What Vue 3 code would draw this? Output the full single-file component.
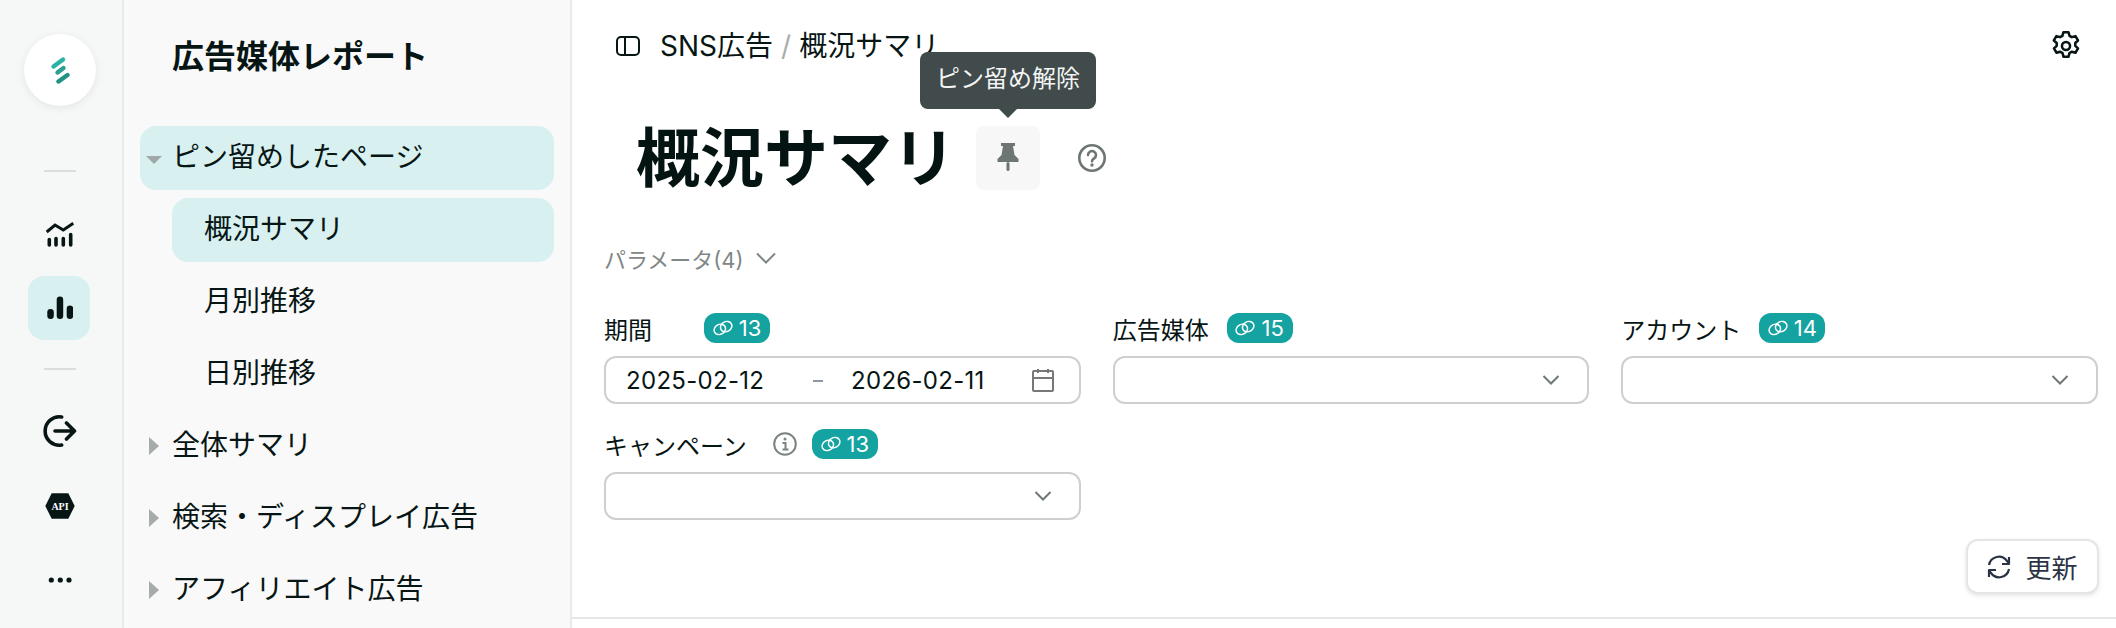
<script setup>
const fields = [
  { label: "期間", count: 13, date: true, wide: true },
  { label: "広告媒体", count: 15 },
  { label: "アカウント", count: 14 },
  { label: "キャンペーン", count: 13, info: true },
];
const groups = ["全体サマリ", "検索・ディスプレイ広告", "アフィリエイト広告"];
const pages = ["月別推移", "日別推移"];
</script>

<template>
  <div class="page">
    <aside class="rail">
      <div class="logo">
        <svg width="20" height="30" viewBox="0 0 20 30" fill="none" stroke-width="4.4" stroke-linecap="round">
          <path d="M3.5 11.5 13 4.5" stroke="#2cb3a6" />
          <path d="M7.5 17.5 13.5 13" stroke="#2a9f92" />
          <path d="M8.5 26.5 17.5 20" stroke="#1f9384" />
        </svg>
      </div>
      <div class="rule first"></div>
      <div class="rail-btn">
        <svg class="chart" width="30" height="26" viewBox="0 0 30 26" fill="none" stroke="#071615">
          <path d="M1.7 10 10 3l8.3 5 10-6.7" stroke-width="3" />
          <path d="M4.3 17.5V23M11 16.5V23M18.3 16.5V23M25.7 12.5V23" stroke-width="3.6" stroke-linecap="round" />
        </svg>
      </div>
      <div class="rail-btn active">
        <svg width="28" height="24" viewBox="0 0 28 24" fill="#071615">
          <rect x="2.3" y="13" width="6.5" height="10" rx="3.2" />
          <rect x="11.7" y="0.5" width="6.5" height="22.5" rx="3.2" />
          <rect x="21.7" y="9.5" width="6.5" height="13.5" rx="3.2" />
        </svg>
      </div>
      <div class="rule"></div>
      <div class="rail-btn exit">
        <svg width="34" height="36" viewBox="0 0 34 36" fill="none" stroke="#071615" stroke-width="3.6" stroke-linecap="round" stroke-linejoin="round">
          <path d="M18.7 4A14.2 14.2 0 1 0 18.7 32" />
          <path d="M12 18h19.5M23.5 10l8 8-8 8" />
        </svg>
      </div>
      <div class="rail-btn api">
        <svg width="32" height="28" viewBox="0 0 32 28">
          <path d="M1.3 14 7.7 1.3h16.6L30.7 14l-6.4 12.7H7.7z" fill="#071615" />
          <text x="16" y="17.5" text-anchor="middle" class="api-text">API</text>
        </svg>
      </div>
      <div class="rail-btn dots">
        <svg width="26" height="6" viewBox="0 0 26 6" fill="#071615">
          <circle cx="4.3" cy="3" r="2.6" />
          <circle cx="13.3" cy="3" r="2.6" />
          <circle cx="22" cy="3" r="2.6" />
        </svg>
      </div>
    </aside>

    <nav class="side">
      <h2>広告媒体レポート</h2>
      <ul>
        <li class="item selected">
          <span class="arrow-down"></span>ピン留めしたページ
        </li>
        <li class="item sub selected">概況サマリ</li>
        <li v-for="page in pages" :key="page" class="item sub">{{ page }}</li>
        <li v-for="group in groups" :key="group" class="item">
          <span class="arrow-right"></span>{{ group }}
        </li>
      </ul>
    </nav>

    <main class="main">
      <header class="topbar">
        <svg class="panel" width="24" height="20" viewBox="0 0 24 20" fill="none" stroke="#071615" stroke-width="2">
          <rect x="1" y="1" width="22" height="18" rx="4" />
          <path d="M9 1v18" />
        </svg>
        <span class="crumb">SNS広告</span>
        <span class="slash">/</span>
        <span class="crumb">概況サマリ</span>
        <svg class="gear" width="36" height="36" viewBox="0 0 24 24" fill="none" stroke="#071615" stroke-width="1.7" stroke-linejoin="round">
          <path d="M10.3 2.8h3.4l.6 2.4 1.6.9 2.4-.7 1.7 2.9-1.8 1.7v1.9l1.8 1.7-1.7 2.9-2.4-.7-1.6.9-.6 2.4h-3.4l-.6-2.4-1.6-.9-2.4.7-1.7-2.9 1.8-1.7v-1.9L3.9 8.3l1.7-2.9 2.4.7 1.6-.9z" />
          <circle cx="12" cy="12" r="2.7" />
        </svg>
      </header>

      <div class="title-row">
        <h1>概況サマリ</h1>
        <div class="pin">
          <div class="tooltip">ピン留め解除</div>
          <svg width="24" height="32" viewBox="0 0 24 32" fill="#6d7575">
            <path d="M5 1h14v3h-2l1.5 9 4 4v3H1.5v-3l4-4L7 4H5z" />
            <rect x="10.5" y="20" width="3" height="9" rx="1.5" />
          </svg>
        </div>
        <svg class="help" width="30" height="30" viewBox="0 0 30 30" fill="none" stroke="#6d7575" stroke-width="2.6">
          <circle cx="15" cy="15" r="12.7" />
          <path d="M11 12a4 4 0 1 1 6 3.5c-1.3.7-2 1.3-2 2.8" stroke-linecap="round" />
          <circle cx="15" cy="22" r="1.7" fill="#6d7575" stroke="none" />
        </svg>
      </div>

      <div class="params">
        パラメータ(4)
        <svg width="20" height="12" viewBox="0 0 20 12" fill="none" stroke="#7f8787" stroke-width="2">
          <path d="m1 1.5 9 9 9-9" />
        </svg>
      </div>

      <section class="grid">
        <div v-for="field in fields" :key="field.label" class="field">
          <div class="label" :class="{ wide: field.wide }">
            <span>{{ field.label }}</span>
            <svg v-if="field.info" class="info" width="24" height="24" viewBox="0 0 24 24" fill="none" stroke="#7b8282" stroke-width="2">
              <circle cx="12" cy="12" r="10.8" />
              <path d="M9.5 11H12.5V17M9.5 17.5h6" />
              <circle cx="12" cy="7" r="1.5" fill="#7b8282" stroke="none" />
            </svg>
            <span class="badge">
              <svg width="20" height="18" viewBox="0 0 22 18" fill="none" stroke="#fff" stroke-width="1.6">
                <ellipse cx="7.5" cy="10.5" rx="6.5" ry="5.5" transform="rotate(-30 7.5 10.5)" />
                <ellipse cx="14.5" cy="7.5" rx="6.5" ry="5.5" transform="rotate(-30 14.5 7.5)" />
              </svg>
              {{ field.count }}
            </span>
          </div>
          <div class="input">
            <template v-if="field.date">
              <span class="date">2025-02-12</span>
              <span class="dash"></span>
              <span class="date">2026-02-11</span>
              <svg class="calendar" width="24" height="24" viewBox="0 0 24 24" fill="none" stroke="#777" stroke-width="2">
                <rect x="2" y="3" width="20" height="20" rx="1" />
                <path d="M2 10h20M7 1v4M17 1v4" />
              </svg>
            </template>
            <svg v-else class="chevron" width="18" height="12" viewBox="0 0 18 12" fill="none" stroke="#6f7676" stroke-width="2">
              <path d="m1.5 2 7.5 7.5L16.5 2" />
            </svg>
          </div>
        </div>
      </section>

      <div class="actions">
        <button class="refresh" type="button">
          <svg width="24" height="24" viewBox="0 0 24 24" fill="none" stroke="#2b3445" stroke-width="2.2" stroke-linejoin="round">
            <path d="M2 10A10 10 0 0 1 20 6l2 3M22 14A10 10 0 0 1 4 18l-2-3" />
            <path d="M22 2v7h-7M2 22v-7h7" />
          </svg>
          更新
        </button>
      </div>
      <div class="bottom-line"></div>
    </main>
  </div>
</template>

<style>
html,
body {
  margin: 0;
  overflow: hidden;
  background: #fff;
}
</style>

<style scoped>
.page {
  display: flex;
  width: 2116px;
  height: 628px;
  overflow: hidden;
  font-family: Inter, "Noto Sans CJK JP", sans-serif;
  color: #071615;
}
.rail {
  box-sizing: border-box;
  width: 124px;
  flex: none;
  display: flex;
  flex-direction: column;
  align-items: center;
  padding: 34px 2px 0 0;
  background: #f6f8f8;
  border-right: 2px solid #e9e9e9;
}
.logo {
  width: 72px;
  height: 72px;
  flex: none;
  display: flex;
  align-items: center;
  justify-content: center;
  border-radius: 50%;
  background: #fff;
  box-shadow: 0 2px 8px rgba(0, 0, 0, 0.08);
}
.rule {
  width: 32px;
  height: 2px;
  flex: none;
  background: #dcdcdc;
  margin: 28px 0 29px;
}
.rule.first {
  margin: 64px 0 32px;
}
.rail-btn {
  width: 62px;
  height: 64px;
  flex: none;
  display: flex;
  align-items: center;
  justify-content: center;
  border-radius: 16px;
  margin-bottom: 8px;
}
.chart {
  margin-top: -2px;
}
.rail-btn.active {
  background: #d8f0f0;
  margin-bottom: 0;
  margin-right: 2px;
}
.rail-btn.exit {
  margin-bottom: 11px;
}
.rail-btn.api {
  margin-bottom: 9px;
}
.rail-btn.dots svg {
  margin-top: 2px;
}
.api-text {
  font-family: "Liberation Serif", serif;
  font-size: 10px;
  font-weight: 700;
  fill: #fff;
}
.side {
  box-sizing: border-box;
  width: 448px;
  flex: none;
  padding: 0 16px;
  background: #f9f9f9;
  border-right: 2px solid #e9e9e9;
}
.side h2 {
  margin: 0;
  height: 126px;
  padding: 39px 0 0 32px;
  box-sizing: border-box;
  font-size: 32px;
  line-height: 36px;
  font-weight: 700;
  white-space: nowrap;
}
.side ul {
  list-style: none;
  margin: 0;
  padding: 0;
}
.item {
  position: relative;
  height: 64px;
  margin-bottom: 8px;
  padding-left: 32px;
  border-radius: 16px;
  font-size: 28px;
  line-height: 63px;
  white-space: nowrap;
}
.item.selected {
  background: #d8f0f0;
}
.item.sub {
  margin-left: 32px;
}
.arrow-down,
.arrow-right {
  position: absolute;
  width: 0;
  height: 0;
}
.arrow-down {
  left: 6px;
  top: 30px;
  border-left: 8px solid transparent;
  border-right: 8px solid transparent;
  border-top: 8px solid #9fa9a9;
}
.arrow-right {
  left: 9px;
  top: 23px;
  border-top: 9px solid transparent;
  border-bottom: 9px solid transparent;
  border-left: 10px solid #a6abab;
}
.main {
  flex: 1;
  min-width: 0;
  position: relative;
}
.topbar {
  display: flex;
  align-items: center;
  height: 92px;
  padding: 0 32px 0 44px;
  box-sizing: border-box;
  font-size: 28px;
}
.panel {
  margin-right: 20px;
}
.crumb {
  line-height: 40px;
}
.slash {
  color: #a7adad;
  margin: 0 8px;
}
.gear {
  margin-left: auto;
}
.title-row {
  display: flex;
  align-items: center;
  height: 64px;
  margin-top: 34px;
  padding-left: 64px;
}
.title-row h1 {
  margin: 0 20px 0 0;
  font-size: 64px;
  font-weight: 700;
  line-height: 64px;
  color: #041413;
  white-space: nowrap;
}
.pin {
  position: relative;
  width: 64px;
  height: 64px;
  display: flex;
  align-items: center;
  justify-content: center;
  background: #f7f7f7;
  border-radius: 8px;
}
.tooltip {
  position: absolute;
  left: 50%;
  top: -74px;
  transform: translateX(-50%);
  width: 176px;
  height: 57px;
  text-align: center;
  line-height: 54px;
  font-size: 24px;
  color: #f3f5f5;
  background: #414b4b;
  border-radius: 8px;
  white-space: nowrap;
}
.tooltip::after {
  content: "";
  position: absolute;
  left: 50%;
  bottom: -9px;
  margin-left: -10px;
  border-left: 10px solid transparent;
  border-right: 10px solid transparent;
  border-top: 10px solid #414b4b;
}
.help {
  margin-left: 37px;
}
.params {
  display: flex;
  align-items: center;
  gap: 12px;
  margin: 50px 0 0 32px;
  height: 36px;
  font-size: 22px;
  color: #7f8787;
}
.grid {
  display: grid;
  grid-template-columns: repeat(3, 1fr);
  column-gap: 32px;
  row-gap: 25px;
  margin: 37px 18px 0 32px;
}
.label {
  display: flex;
  align-items: center;
  gap: 18px;
  height: 30px;
  margin-bottom: 13px;
  font-size: 24px;
  white-space: nowrap;
}
.label.wide {
  gap: 52px;
}
.info {
  margin-left: 8px;
  margin-right: -3px;
}
.badge {
  display: flex;
  align-items: center;
  justify-content: center;
  gap: 6px;
  width: 66px;
  height: 30px;
  box-sizing: border-box;
  border-radius: 12px;
  background: #14a3a1;
  color: #fff;
  font-size: 22px;
}
.input {
  box-sizing: border-box;
  height: 48px;
  display: flex;
  align-items: center;
  padding: 0 24px 0 20px;
  border: 2px solid #cfcfcf;
  border-radius: 12px;
  background: #fff;
}
.date {
  font-size: 24px;
  width: 138px;
  letter-spacing: 0.3px;
  white-space: nowrap;
}
.dash {
  width: 10px;
  height: 2px;
  margin: 2px 28px 0 49px;
  background: #8e97a6;
}
.calendar {
  margin-left: auto;
}
.chevron {
  margin-left: auto;
  margin-right: 3px;
}
.actions {
  display: flex;
  justify-content: flex-end;
  margin: 19px 17px 0 0;
}
.refresh {
  display: flex;
  align-items: center;
  justify-content: center;
  gap: 14px;
  width: 133px;
  height: 55px;
  padding: 0;
  border: 2px solid #e5e5e5;
  border-radius: 12px;
  background: #fff;
  box-shadow: 0 2px 4px rgba(0, 0, 0, 0.1);
  font-family: Inter, "Noto Sans CJK JP", sans-serif;
  font-size: 26px;
  color: #2b3445;
}
.bottom-line {
  height: 2px;
  margin-top: 23px;
  background: #e6e6e6;
}
</style>
